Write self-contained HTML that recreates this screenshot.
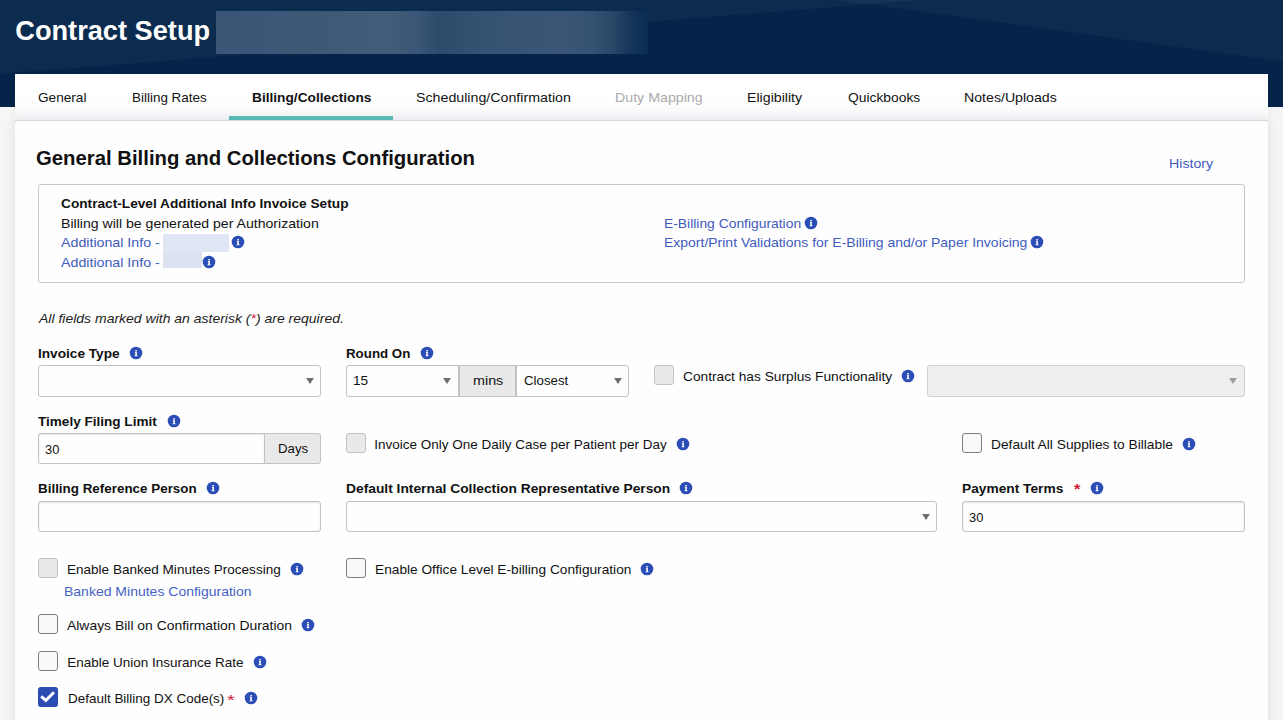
<!DOCTYPE html>
<html lang="en">
<head>
<meta charset="utf-8">
<title>Contract Setup</title>
<style>
html,body{margin:0;padding:0;}
body{width:1283px;height:720px;overflow:hidden;position:relative;background:#f6f6f7;font-family:"Liberation Sans",sans-serif;color:#111;}
.a{position:absolute;}
h1,h2,p{margin:0;}
a{text-decoration:none;cursor:pointer;}
.tx{position:absolute;display:block;white-space:nowrap;line-height:20px;height:20px;transform-origin:0 50%;}
#hdr{left:0;top:0;width:1283px;height:107px;background:#042549;overflow:hidden;}
#hdr svg{position:absolute;left:0;top:0;}
#redact{left:216px;top:11px;width:432px;height:42.5px;background:linear-gradient(90deg,#3a5575 0%,#3e5978 25%,#425c7b 40%,#3a5575 47%,#2c4a6a 52%,#30506f 57%,#375373 65%,#3a5575 80%,#365272 87%,#284666 92%,#133359 96.5%,#0a2b54 100%);}
#tabs{left:15px;top:74px;width:1253px;height:46px;background:linear-gradient(#fff 0%,#fff 55%,#f6f6f8 100%);border-bottom:1px solid #e0e0e4;box-shadow:0 0 8px rgba(0,0,0,0.06);box-sizing:content-box;}
#tabul{left:229px;top:116px;width:164px;height:4px;background:#59c1b9;}
#card{left:15px;top:121px;width:1253px;height:620px;background:#fefefe;border-radius:4px 4px 0 0;box-shadow:0 0 13px rgba(40,40,80,0.11);}
.box{border:1px solid #c6c6c6;border-radius:3px;box-sizing:border-box;background:#fefefe;}
.fld{border:1px solid #c2c2c2;border-radius:3px;box-sizing:border-box;background:#fefefe;}
.inp{box-shadow:inset 0 1px 2px rgba(0,0,0,0.1);}
.dis{background:#eeeeee;border-color:#cfcfcf;}
.addon{background:#e9e9e9;border:1px solid #c2c2c2;box-sizing:border-box;}
.cb{width:20px;height:20px;box-sizing:border-box;border:1px solid #7d7d7d;border-radius:3px;background:#f9f9f9;}
.cb.d{background:#e9e9e9;border-color:#c2c2c2;}
.cb.c{background:#2b4db3;border-color:#2b4db3;border-radius:2.5px;}
.ic{width:14px;height:14px;}
</style>
</head>
<body>
<header>
<div id="hdr" class="a"><svg width="1283" height="107" viewBox="0 0 1283 107"><polygon points="0,0 925,0 868.5,4.2 0,74" fill="#ffffff" fill-opacity="0.035"/><polygon points="835,0 1283,0 1283,61.5 868.5,4.2" fill="#ffffff" fill-opacity="0.035"/></svg><div id="redact" class="a"></div></div>
<h1 class="tx" style="left:15.27px;top:21px;font-size:27.2px;font-weight:bold;color:#fff;">Contract Setup</h1>
</header>
<nav>
<div id="tabs" class="a"></div>
<div id="tabul" class="a"></div>
<a class="tx" style="left:38.18px;top:88px;font-size:13.5px;color:#111;transform:scaleX(1.0083);">General</a>
<a class="tx" style="left:131.77px;top:88px;font-size:13.5px;color:#111;transform:scaleX(0.9963);">Billing Rates</a>
<a class="tx" style="left:251.76px;top:88px;font-size:13.5px;font-weight:bold;color:#111;transform:scaleX(1.0145);">Billing/Collections</a>
<a class="tx" style="left:415.60px;top:88px;font-size:13.5px;color:#111;transform:scaleX(1.0530);">Scheduling/Confirmation</a>
<a class="tx" style="left:615.02px;top:88px;font-size:13.5px;color:#aaaaaa;transform:scaleX(1.0526);">Duty Mapping</a>
<a class="tx" style="left:747.32px;top:88px;font-size:13.5px;color:#111;transform:scaleX(1.0495);">Eligibility</a>
<a class="tx" style="left:847.70px;top:88px;font-size:13.5px;color:#111;transform:scaleX(1.0236);">Quickbooks</a>
<a class="tx" style="left:964.32px;top:88px;font-size:13.5px;color:#111;transform:scaleX(1.0481);">Notes/Uploads</a>
</nav>
<main>
<div id="card" class="a"></div>
<div class="a box" style="left:38px;top:184px;width:1207px;height:99px"></div>
<div class="a" style="left:163px;top:234px;width:66px;height:18px;background:#e1e6f4"></div>
<div class="a" style="left:163px;top:252px;width:39px;height:16px;background:#dde2f0"></div>
<div class="a fld " style="left:38px;top:365px;width:283px;height:32px;"></div>
<svg class="a" style="left:304.5px;top:377px" width="10" height="8" viewBox="0 0 10 8"><polygon points="1.1,1 8.9,1 5,7.1" fill="#6e6e6e"/></svg>
<div class="a fld " style="left:346px;top:365px;width:113px;height:32px;border-radius:3px 0 0 3px;"></div>
<svg class="a" style="left:441.5px;top:377px" width="10" height="8" viewBox="0 0 10 8"><polygon points="1.1,1 8.9,1 5,7.1" fill="#6e6e6e"/></svg>
<div class="a addon" style="left:459px;top:365px;width:57px;height:32px"></div>
<div class="a fld " style="left:516px;top:365px;width:113px;height:32px;border-radius:0 3px 3px 0;"></div>
<svg class="a" style="left:612.6px;top:377px" width="10" height="8" viewBox="0 0 10 8"><polygon points="1.1,1 8.9,1 5,7.1" fill="#6e6e6e"/></svg>
<div class="a cb d" style="left:654px;top:365px"></div>
<div class="a fld dis" style="left:927px;top:365px;width:318px;height:32px;"></div>
<svg class="a" style="left:1228.4px;top:377px" width="10" height="8" viewBox="0 0 10 8"><polygon points="1.1,1 8.9,1 5,7.1" fill="#9c9c9c"/></svg>
<div class="a fld inp" style="left:38px;top:433px;width:227px;height:31px;border-radius:3px 0 0 3px;"></div>
<div class="a addon" style="left:264px;top:433px;width:57px;height:31px;border-radius:0 3px 3px 0"></div>
<div class="a cb d" style="left:346px;top:433px"></div>
<div class="a cb " style="left:962px;top:433px"></div>
<div class="a fld inp" style="left:38px;top:501px;width:283px;height:31px;"></div>
<div class="a fld " style="left:346px;top:501px;width:591px;height:31px;"></div>
<svg class="a" style="left:920.5px;top:513px" width="10" height="8" viewBox="0 0 10 8"><polygon points="1.1,1 8.9,1 5,7.1" fill="#6e6e6e"/></svg>
<div class="a fld inp" style="left:962px;top:501px;width:283px;height:31px;"></div>
<div class="a cb d" style="left:38px;top:558px"></div>
<div class="a cb " style="left:346px;top:558px"></div>
<div class="a cb " style="left:38px;top:614px"></div>
<div class="a cb " style="left:38px;top:651px"></div>
<div class="a cb c" style="left:38px;top:687px"><svg width="20" height="20" viewBox="0 0 20 20" style="position:absolute;left:-1px;top:-1px"><polyline points="3.2,9.3 7.8,13.4 16,5.3" fill="none" stroke="#fff" stroke-width="2.9"/></svg></div>
<svg class="a ic" style="left:230.6px;top:235.2px" viewBox="-7 -7 14 14"><circle r="6.3" fill="#2b4eb6"/><path d="M-0.65,-3h1.55v1.2h-1.55z M-1.15,-1.2h2.05v3.4h0.55v1h-2.8v-1h0.6v-2.4h-0.4z" fill="#fff" fill-opacity="0.95"/></svg>
<svg class="a ic" style="left:202.3px;top:255px" viewBox="-7 -7 14 14"><circle r="6.3" fill="#2b4eb6"/><path d="M-0.65,-3h1.55v1.2h-1.55z M-1.15,-1.2h2.05v3.4h0.55v1h-2.8v-1h0.6v-2.4h-0.4z" fill="#fff" fill-opacity="0.95"/></svg>
<svg class="a ic" style="left:804.4px;top:215.7px" viewBox="-7 -7 14 14"><circle r="6.3" fill="#2b4eb6"/><path d="M-0.65,-3h1.55v1.2h-1.55z M-1.15,-1.2h2.05v3.4h0.55v1h-2.8v-1h0.6v-2.4h-0.4z" fill="#fff" fill-opacity="0.95"/></svg>
<svg class="a ic" style="left:1030px;top:235.2px" viewBox="-7 -7 14 14"><circle r="6.3" fill="#2b4eb6"/><path d="M-0.65,-3h1.55v1.2h-1.55z M-1.15,-1.2h2.05v3.4h0.55v1h-2.8v-1h0.6v-2.4h-0.4z" fill="#fff" fill-opacity="0.95"/></svg>
<svg class="a ic" style="left:128.8px;top:346.1px" viewBox="-7 -7 14 14"><circle r="6.3" fill="#2b4eb6"/><path d="M-0.65,-3h1.55v1.2h-1.55z M-1.15,-1.2h2.05v3.4h0.55v1h-2.8v-1h0.6v-2.4h-0.4z" fill="#fff" fill-opacity="0.95"/></svg>
<svg class="a ic" style="left:419.5px;top:346.1px" viewBox="-7 -7 14 14"><circle r="6.3" fill="#2b4eb6"/><path d="M-0.65,-3h1.55v1.2h-1.55z M-1.15,-1.2h2.05v3.4h0.55v1h-2.8v-1h0.6v-2.4h-0.4z" fill="#fff" fill-opacity="0.95"/></svg>
<svg class="a ic" style="left:167px;top:414.2px" viewBox="-7 -7 14 14"><circle r="6.3" fill="#2b4eb6"/><path d="M-0.65,-3h1.55v1.2h-1.55z M-1.15,-1.2h2.05v3.4h0.55v1h-2.8v-1h0.6v-2.4h-0.4z" fill="#fff" fill-opacity="0.95"/></svg>
<svg class="a ic" style="left:901px;top:369.1px" viewBox="-7 -7 14 14"><circle r="6.3" fill="#2b4eb6"/><path d="M-0.65,-3h1.55v1.2h-1.55z M-1.15,-1.2h2.05v3.4h0.55v1h-2.8v-1h0.6v-2.4h-0.4z" fill="#fff" fill-opacity="0.95"/></svg>
<svg class="a ic" style="left:676.3px;top:437.2px" viewBox="-7 -7 14 14"><circle r="6.3" fill="#2b4eb6"/><path d="M-0.65,-3h1.55v1.2h-1.55z M-1.15,-1.2h2.05v3.4h0.55v1h-2.8v-1h0.6v-2.4h-0.4z" fill="#fff" fill-opacity="0.95"/></svg>
<svg class="a ic" style="left:1181.9px;top:437.2px" viewBox="-7 -7 14 14"><circle r="6.3" fill="#2b4eb6"/><path d="M-0.65,-3h1.55v1.2h-1.55z M-1.15,-1.2h2.05v3.4h0.55v1h-2.8v-1h0.6v-2.4h-0.4z" fill="#fff" fill-opacity="0.95"/></svg>
<svg class="a ic" style="left:205.6px;top:481.2px" viewBox="-7 -7 14 14"><circle r="6.3" fill="#2b4eb6"/><path d="M-0.65,-3h1.55v1.2h-1.55z M-1.15,-1.2h2.05v3.4h0.55v1h-2.8v-1h0.6v-2.4h-0.4z" fill="#fff" fill-opacity="0.95"/></svg>
<svg class="a ic" style="left:678.8px;top:481.2px" viewBox="-7 -7 14 14"><circle r="6.3" fill="#2b4eb6"/><path d="M-0.65,-3h1.55v1.2h-1.55z M-1.15,-1.2h2.05v3.4h0.55v1h-2.8v-1h0.6v-2.4h-0.4z" fill="#fff" fill-opacity="0.95"/></svg>
<svg class="a ic" style="left:1090px;top:481.2px" viewBox="-7 -7 14 14"><circle r="6.3" fill="#2b4eb6"/><path d="M-0.65,-3h1.55v1.2h-1.55z M-1.15,-1.2h2.05v3.4h0.55v1h-2.8v-1h0.6v-2.4h-0.4z" fill="#fff" fill-opacity="0.95"/></svg>
<svg class="a ic" style="left:289.8px;top:562.2px" viewBox="-7 -7 14 14"><circle r="6.3" fill="#2b4eb6"/><path d="M-0.65,-3h1.55v1.2h-1.55z M-1.15,-1.2h2.05v3.4h0.55v1h-2.8v-1h0.6v-2.4h-0.4z" fill="#fff" fill-opacity="0.95"/></svg>
<svg class="a ic" style="left:640px;top:562.2px" viewBox="-7 -7 14 14"><circle r="6.3" fill="#2b4eb6"/><path d="M-0.65,-3h1.55v1.2h-1.55z M-1.15,-1.2h2.05v3.4h0.55v1h-2.8v-1h0.6v-2.4h-0.4z" fill="#fff" fill-opacity="0.95"/></svg>
<svg class="a ic" style="left:301.3px;top:618.2px" viewBox="-7 -7 14 14"><circle r="6.3" fill="#2b4eb6"/><path d="M-0.65,-3h1.55v1.2h-1.55z M-1.15,-1.2h2.05v3.4h0.55v1h-2.8v-1h0.6v-2.4h-0.4z" fill="#fff" fill-opacity="0.95"/></svg>
<svg class="a ic" style="left:253px;top:655.2px" viewBox="-7 -7 14 14"><circle r="6.3" fill="#2b4eb6"/><path d="M-0.65,-3h1.55v1.2h-1.55z M-1.15,-1.2h2.05v3.4h0.55v1h-2.8v-1h0.6v-2.4h-0.4z" fill="#fff" fill-opacity="0.95"/></svg>
<svg class="a ic" style="left:244.3px;top:691.2px" viewBox="-7 -7 14 14"><circle r="6.3" fill="#2b4eb6"/><path d="M-0.65,-3h1.55v1.2h-1.55z M-1.15,-1.2h2.05v3.4h0.55v1h-2.8v-1h0.6v-2.4h-0.4z" fill="#fff" fill-opacity="0.95"/></svg>
<h2 class="tx" style="left:35.86px;top:148px;font-size:20px;font-weight:bold;transform:scaleX(1.0157);">General Billing and Collections Configuration</h2>
<a class="tx" style="left:1168.82px;top:154px;font-size:13.5px;color:#3f5bbd;transform:scaleX(1.0500);">History</a>
<strong class="tx" style="left:61.20px;top:194px;font-size:13.5px;font-weight:bold;transform:scaleX(1.0131);">Contract-Level Additional Info Invoice Setup</strong>
<div class="tx" style="left:61.33px;top:214px;font-size:13.5px;transform:scaleX(1.0439);">Billing will be generated per Authorization</div>
<a class="tx" style="left:61.04px;top:233px;font-size:13.5px;color:#3f5bbd;transform:scaleX(1.0527);">Additional Info -</a>
<a class="tx" style="left:61.04px;top:253px;font-size:13.5px;color:#3f5bbd;transform:scaleX(1.0527);">Additional Info -</a>
<a class="tx" style="left:664.04px;top:214px;font-size:13.5px;color:#3f5bbd;transform:scaleX(1.0265);">E-Billing Configuration</a>
<a class="tx" style="left:664.03px;top:233px;font-size:13.5px;color:#3f5bbd;transform:scaleX(1.0355);">Export/Print Validations for E-Billing and/or Paper Invoicing</a>
<p class="tx" style="left:39.06px;top:309px;font-size:13.5px;font-style:italic;color:#222;transform:scaleX(1.0364);">All fields marked with an asterisk (<span style="color:#cf1733">*</span>) are required.</p>
<label class="tx" style="left:38.34px;top:344px;font-size:13.5px;font-weight:bold;transform:scaleX(1.0102);">Invoice Type</label>
<label class="tx" style="left:345.68px;top:344px;font-size:13.5px;font-weight:bold;transform:scaleX(0.9866);">Round On</label>
<label class="tx" style="left:38.36px;top:412px;font-size:13.5px;font-weight:bold;transform:scaleX(1.0039);">Timely Filing Limit</label>
<label class="tx" style="left:37.87px;top:479px;font-size:13.5px;font-weight:bold;transform:scaleX(0.9931);">Billing Reference Person</label>
<label class="tx" style="left:345.65px;top:479px;font-size:13.5px;font-weight:bold;transform:scaleX(1.0217);">Default Internal Collection Representative Person</label>
<label class="tx" style="left:962.15px;top:479px;font-size:13.5px;font-weight:bold;transform:scaleX(1.0175);">Payment Terms</label>
<span class="tx" style="left:1073.64px;top:479px;font-size:15.5px;font-weight:bold;color:#cf1733;transform:scaleX(1.0591);">*</span>
<div class="tx" style="left:352.78px;top:371px;font-size:13.5px;transform:scaleX(1.0100);">15</div>
<div class="tx" style="left:472.91px;top:371px;font-size:13.5px;transform:scaleX(1.0619);">mins</div>
<div class="tx" style="left:523.70px;top:371px;font-size:13.5px;transform:scaleX(0.9822);">Closest</div>
<div class="tx" style="left:45.27px;top:440px;font-size:13.5px;transform:scaleX(0.9551);">30</div>
<div class="tx" style="left:277.68px;top:439px;font-size:13.5px;transform:scaleX(0.9809);">Days</div>
<div class="tx" style="left:969.07px;top:508px;font-size:13.5px;transform:scaleX(0.9551);">30</div>
<label class="tx" style="left:682.77px;top:367px;font-size:13.5px;transform:scaleX(1.0172);">Contract has Surplus Functionality</label>
<label class="tx" style="left:374.14px;top:435px;font-size:13.5px;">Invoice Only One Daily Case per Patient per Day</label>
<label class="tx" style="left:991.05px;top:435px;font-size:13.5px;transform:scaleX(1.0182);">Default All Supplies to Billable</label>
<label class="tx" style="left:67.16px;top:560px;font-size:13.5px;transform:scaleX(1.0028);">Enable Banked Minutes Processing</label>
<a class="tx" style="left:63.53px;top:582px;font-size:13.5px;color:#4463c4;transform:scaleX(1.0369);">Banked Minutes Configuration</a>
<label class="tx" style="left:374.75px;top:560px;font-size:13.5px;transform:scaleX(1.0148);">Enable Office Level E-billing Configuration</label>
<label class="tx" style="left:67.24px;top:616px;font-size:13.5px;transform:scaleX(1.0304);">Always Bill on Confirmation Duration</label>
<label class="tx" style="left:67.17px;top:653px;font-size:13.5px;">Enable Union Insurance Rate</label>
<label class="tx" style="left:67.57px;top:689px;font-size:13.5px;transform:scaleX(0.9969);">Default Billing DX Code(s)</label>
<span class="tx" style="left:227.25px;top:690px;font-size:15.5px;color:#cf1733;transform:scaleX(1.2972);">*</span>
</main>
</body>
</html>
